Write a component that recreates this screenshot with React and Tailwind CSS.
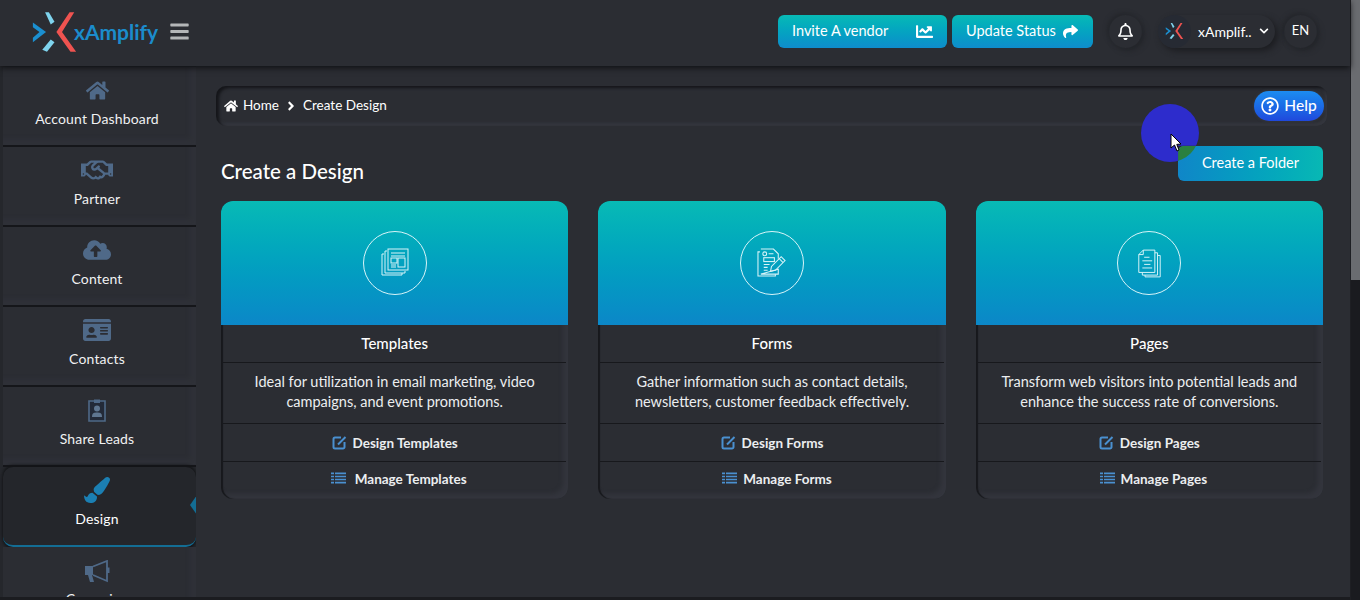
import React from "react";
import {
  FaHome, FaRegHandshake, FaCloudUploadAlt, FaIdCard, FaPaintBrush,
  FaChartLine, FaShare, FaRegBell, FaRegQuestionCircle, FaBars, FaChevronDown, FaAngleRight,
} from "react-icons/fa";

const font = { fontFamily: '"Lato", "Open Sans", sans-serif' };

const BadgeIcon = () => (
  <svg viewBox="0 0 18 24" className="w-[18px] h-[24px]">
    <path d="M1 3 H17 V23 H1 Z" fill="#232a38" stroke="#4f6988" strokeWidth="1.6" />
    <path d="M6 1.5 H12 V5 H6 Z" fill="#4f6988" />
    <circle cx="9" cy="10.5" r="3" fill="#5f7690" />
    <path d="M4 19 C4 15 6 14.5 9 14.5 C12 14.5 14 15 14 19 Z" fill="#5f7690" />
  </svg>
);

const HornIcon = () => (
  <svg viewBox="0 0 26 24" className="w-[26px] h-[24px] mt-[4px]">
    <path d="M1 6 H9 V15 H8 L10 22 H6 L4 15 H1 Z" fill="#4f6988" />
    <path d="M9 6.5 L23 1 V21 L9 15" fill="none" stroke="#4f6988" strokeWidth="1.8" />
    <path d="M23 7.5 H25.5 V13 H23 Z" fill="#4f6988" />
  </svg>
);

const menu = [
  { label: "Account Dashboard", Icon: FaHome, size: "text-[23px]" },
  { label: "Partner", Icon: FaRegHandshake, size: "text-[32px]" },
  { label: "Content", Icon: FaCloudUploadAlt, size: "text-[28px]" },
  { label: "Contacts", Icon: FaIdCard, size: "text-[28px]" },
  { label: "Share Leads", Icon: BadgeIcon, size: "" },
  { label: "Design", Icon: FaPaintBrush, size: "text-[26px]", active: true },
  { label: "Campaign", Icon: HornIcon, size: "" },
];

const cards = [
  {
    title: "Templates",
    text: ["Ideal for utilization in email marketing, video", "campaigns, and event promotions."],
    design: "Design Templates",
    manage: "Manage Templates",
    icon: "templates",
    manageRow: "gap-[9px] pl-[8px]",
  },
  {
    title: "Forms",
    text: ["Gather information such as contact details,", "newsletters, customer feedback effectively."],
    design: "Design Forms",
    manage: "Manage Forms",
    icon: "forms",
    manageRow: "gap-[6px] pl-[10px]",
  },
  {
    title: "Pages",
    text: ["Transform web visitors into potential leads and", "enhance the success rate of conversions."],
    design: "Design Pages",
    manage: "Manage Pages",
    icon: "pages",
    manageRow: "gap-[6px] pl-[8px]",
  },
];

const Logo = ({ small }) => (
  <svg viewBox="30 8 50 46" className={small ? "w-[19px] h-[18px]" : "w-[47px] h-[44px]"}>
    <path d="M32 21 L46 31 L32 42 L32 37 L39 31 L32 26 Z" fill="#1b8fd0" />
    <path d="M45 10 L49 10 L55 20 L51 23 Z" fill="#7fd4ee" />
    <path d="M42 50 L51 39 L55 42 L47 52 Z" fill="#7fd4ee" />
    <path d="M71 10 L76 10 L63 31 L78 52 L72 52 L57 31 Z" fill="#ef5350" />
  </svg>
);

const EditIcon = () => (
  <svg viewBox="0 0 15 15" className="w-[15px] h-[15px] -mt-[3px]" fill="none" stroke="#4a90d0">
    <path d="M9 2.5 H3 A1.5 1.5 0 0 0 1.5 4 V12 A1.5 1.5 0 0 0 3 13.5 H11 A1.5 1.5 0 0 0 12.5 12 V7" strokeWidth="2" />
    <path d="M6 9.5 L13.5 2" strokeWidth="2" />
  </svg>
);

const ListIcon = () => (
  <svg viewBox="0 0 15 12" className="w-[15px] h-[12px] -mt-[2px]" fill="#4a90d0">
    <path d="M0 0.5 H3 V2.3 H0 Z M4 0.5 H15 V2.3 H4 Z" />
    <path d="M0 3.7 H3 V5.3 H0 Z M4 3.7 H15 V5.3 H4 Z" />
    <path d="M0 6.7 H3 V8.3 H0 Z M4 6.7 H15 V8.3 H4 Z" />
    <path d="M0 9.7 H3 V11.5 H0 Z M4 9.7 H15 V11.5 H4 Z" />
  </svg>
);

const DesignIcon = ({ name }) => {
  if (name === "templates") {
    return (
      <svg viewBox="0 0 30 30" className="w-[30px] h-[30px]" fill="none" stroke="#d8f4f8" strokeWidth="1">
        <path d="M4 6 H2 V27 H22 V25" />
        <path d="M7 3 H5 V25 H25 V23" />
        <rect x="8" y="1" width="20" height="21" />
        <path d="M11 5 H25 M11 8 H25" />
        <rect x="11" y="10" width="6" height="5" />
        <rect x="18" y="10" width="7" height="9" />
        <path d="M11 17 H16 M11 19 H16" />
      </svg>
    );
  }
  if (name === "forms") {
    return (
      <svg viewBox="0 0 30 32" className="w-[29px] h-[31px]" fill="none" stroke="#d8f4f8" strokeWidth="1.1">
        <path d="M3 4 H1 V29 H19 V27" />
        <path d="M4 1 H17 L22 6 V11 M22 22 V27 H4 Z" />
        <circle cx="8" cy="6" r="2" />
        <path d="M12 6 H17" />
        <rect x="7" y="10" width="11" height="4" />
        <path d="M7 17 H13 M7 20 H11 M7 23 H11" />
        <path d="M14 24 L15 19 L25 9 L29 13 L19 23 Z M23 11 L27 15" />
      </svg>
    );
  }
  return (
    <svg viewBox="0 0 28 32" className="w-[25px] h-[29px]" fill="none" stroke="#d8f4f8" strokeWidth="1.1">
      <path d="M7 1 H20 V26 H2 V6 Z M7 1 V6 H2" />
      <path d="M20 4 H23 V29 H6 V26" />
      <path d="M23 7 H26 V31 H9 V29" />
      <path d="M8 9 H14 M6 13 H17 M8 17 H15 M6 21 H17" />
    </svg>
  );
};

const Card = ({ card }) => (
  <div className="flex-1 rounded-[12px] overflow-hidden bg-[#2b2d33] shadow-[inset_2px_0_1px_#17181c,inset_-5px_-5px_4px_#33353d]">
    <div className="h-[124px] flex items-center justify-center bg-gradient-to-b from-[#08bab5] to-[#0c87c8]">
      <div className="w-[64px] h-[64px] rounded-full border border-[#d8f4f8] flex items-center justify-center">
        <DesignIcon name={card.icon} />
      </div>
    </div>
    <div className="h-[38px] pb-[1px] flex items-center justify-center text-[15px] font-medium text-white border-b border-[#17181c] mx-[2px]">
      {card.title}
    </div>
    <div className="h-[61px] pb-[2px] flex flex-col items-center justify-center text-[14.5px] leading-[20px] text-[#eceef0] border-b border-[#17181c] mx-[2px]">
      {card.text.map((line) => (
        <p key={line}>{line}</p>
      ))}
    </div>
    <div className="h-[38px] pt-[2px] flex items-center justify-center gap-[6px] text-[13.5px] font-bold text-[#eceef0] border-b border-[#17181c] mx-[2px]">
      <EditIcon />
      {card.design}
    </div>
    <div className={"h-[37px] pb-[3px] flex items-center justify-center text-[13.5px] font-bold text-[#eceef0] " + card.manageRow}>
      <ListIcon />
      {card.manage}
    </div>
  </div>
);

const App = () => {
  return (
    <div style={font} className="w-[1360px] h-[600px] overflow-hidden flex bg-[#2b2d33] text-white">
      <div className="w-[1350px] h-[600px] flex flex-col relative">
        {/* top bar */}
        <header className="h-[66px] shrink-0 pb-[4px] flex items-center bg-[#2b2d33] shadow-[0_2px_6px_#101114] relative z-10">
          <div className="ml-[31px] mt-[1px] flex items-center">
            <Logo />
            <span className="-ml-[4px] text-[21px] font-bold text-[#1b8ccc] leading-none">xAmplify</span>
          </div>
          <FaBars className="ml-[11px] text-[21px] text-[#b4b6b8]" />
          <div className="ml-auto flex items-center h-full">
            <button className="w-[169px] h-[33px] px-[14px] rounded-[6px] flex items-center justify-between text-[14.5px] bg-gradient-to-b from-[#08bab5] to-[#0f8ccb]">
              Invite A vendor
              <FaChartLine className="text-[17px]" />
            </button>
            <button className="ml-[5px] w-[141px] h-[33px] pl-[14px] pr-[15px] rounded-[6px] flex items-center justify-between text-[14.5px] bg-gradient-to-b from-[#08bab5] to-[#0f8ccb]">
              Update Status
              <FaShare className="text-[15px]" />
            </button>
            <div className="ml-[16px] w-[33px] h-[33px] rounded-full flex items-center justify-center shadow-[-2px_-2px_4px_#24262b,3px_3px_5px_#24262b]">
              <FaRegBell className="text-[17px]" />
            </div>
            <div className="ml-[16px] w-[117px] h-[33px] rounded-full flex items-center bg-[#2b2d33] shadow-[3px_3px_6px_#1c1d21] relative">
              <div className="w-[33px] h-[33px] rounded-full bg-[#262a33] flex items-center justify-center">
                <Logo small />
              </div>
              <span className="ml-[7px] text-[14px]">xAmplif..</span>
              <FaChevronDown className="ml-[7px] text-[10px]" />
            </div>
            <div className="ml-[9px] mr-[33px] w-[33px] h-[33px] rounded-full flex items-center justify-center text-[13px] shadow-[-2px_-2px_4px_#24262b,3px_3px_5px_#24262b]">
              EN
            </div>
          </div>
        </header>

        <div className="flex-1 flex min-h-0">
          {/* sidebar */}
          <aside className="w-[196px] shrink-0 overflow-hidden pl-[3px] pt-[1px] flex flex-col bg-[#25272c]">
            {menu.map(({ label, Icon, size, active }) => (
              <div
                key={label}
                className={
                  active
                    ? "h-[80px] shrink-0 relative flex flex-col items-center pt-[8px] pr-[5px] rounded-[10px] bg-[#24262b] border-b-2 border-[#136d94] shadow-[0_-2px_3px_#141518,0_2px_3px_#141518]"
                    : "h-[80px] shrink-0 relative flex flex-col items-center pt-[8px] pr-[5px] bg-[#2b2d33] border-b-2 border-[#15161a] shadow-[inset_-6px_-6px_4px_#2f3138]"
                }
              >
                <div className="h-[30px] flex items-center">
                  <Icon className={size + (active ? " text-[#1b7fb3]" : " text-[#4f6988]")} />
                </div>
                <span className={"mt-[3px] text-[14px] tracking-[0.15px] " + (active ? "text-white" : "text-[#f0f1f2]")}>{label}</span>
                {active && (
                  <span className="absolute -right-[1px] top-[28px] w-[7px] h-[20px] bg-[#136d94] [clip-path:polygon(100%_0,100%_100%,0_50%)]" />
                )}
              </div>
            ))}
          </aside>

          {/* main content */}
          <main className="flex-1 pl-[20px] pr-[23px] pt-[20px]">
            <div className="h-[40px] rounded-[10px] flex items-center pl-[8px] pr-[3px] text-[13.5px] bg-[#2b2d33] shadow-[inset_3px_2px_3px_#15161a,inset_-2px_-3px_3px_#34363e]">
              <FaHome className="text-[14px] mr-[5px]" />
              <span className="-mt-[2px]">Home</span>
              <FaAngleRight className="ml-[5px] mr-[5px] text-[14px]" />
              <span className="-mt-[2px]">Create Design</span>
              <button className="ml-auto w-[70px] h-[30px] rounded-full flex items-center justify-center gap-[5px] text-[15.5px] font-medium bg-gradient-to-b from-[#1d8cf0] to-[#2048dc] shadow-[0_0_3px_#3a3c44]">
                <FaRegQuestionCircle className="text-[18px]" />
                Help
              </button>
            </div>

            <div className="h-[75px] flex items-end justify-between pl-[5px] pr-[4px] pb-[20px]">
              <h1 className="text-[20.5px] font-medium leading-[24px] -mb-[2px]">Create a Design</h1>
              <button className="relative overflow-hidden w-[145px] h-[35px] pb-[1px] rounded-[6px] text-[14.5px] bg-gradient-to-r from-[#1086c8] to-[#08b8b4]">
                <span className="absolute -left-[37px] -top-[42px] w-[58px] h-[58px] rounded-full bg-[#2a8040]" />
                <span className="relative">Create a Folder</span>
              </button>
            </div>

            <div className="flex gap-[30px] pl-[5px] pr-[4px]">
              {cards.map((card) => (
                <Card key={card.title} card={card} />
              ))}
            </div>
          </main>
        </div>

        <div className="h-[3px] shrink-0 bg-[#1b1c20]" />

        {/* click ripple + pointer from the recording */}
        <span className="absolute left-[1141px] top-[104px] w-[58px] h-[58px] rounded-full bg-[#2d2ccc] [clip-path:polygon(0_0,100%_0,100%_72%,64%_72%,64%_100%,0_100%)]" />
        <svg viewBox="0 0 12 19" className="absolute left-[1170px] top-[133px] w-[12px] h-[19px]">
          <path d="M1 1 L1 15 L4.5 12 L7 18 L9 17 L6.8 11.4 L11 11 Z" fill="#fff" stroke="#000" strokeWidth="1" />
        </svg>
      </div>

      {/* page scrollbar */}
      <div className="w-[10px] h-[600px] bg-[#1a1b1f] border-l border-[#1e1f23]">
        <div className="h-[280px] bg-[#6a6c70]" />
      </div>
    </div>
  );
};

export default App;
